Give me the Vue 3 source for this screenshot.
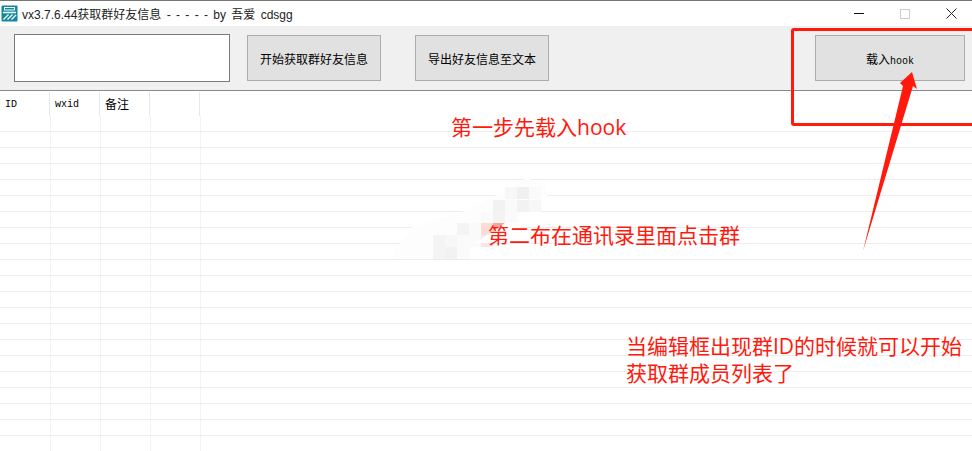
<template>
  <div class="window">
    <div class="titlebar">
      <svg class="app-icon" width="17" height="17" viewBox="0 0 17 17">
        <rect x="0.5" y="0.5" width="16" height="16" rx="1" fill="#0f8a9c" />
        <rect x="3.5" y="2.5" width="10" height="2.5" fill="none" stroke="#fff" stroke-width="1" />
        <path d="M2 7.5 H15 M2.5 14.5 L7.5 9.5 M6.5 14.5 L11.5 9.5 M10.5 14.5 L15 10" stroke="#fff" stroke-width="1.3" fill="none" />
      </svg>
      <span class="title">vx3.7.6.44获取群好友信息 - - - - - by 吾爱 cdsgg</span>
      <div class="win-btns">
        <span class="win-btn"><i class="min"></i></span>
        <span class="win-btn"><i class="max"></i></span>
        <span class="win-btn">
          <svg width="11" height="11" viewBox="0 0 11 11"><path d="M0.5 0.5 L10.5 10.5 M10.5 0.5 L0.5 10.5" stroke="#222" stroke-width="1" fill="none" /></svg>
        </span>
      </div>
    </div>

    <div class="toolbar">
      <div class="editbox"></div>
      <button class="btn start">开始获取群好友信息</button>
      <button class="btn export">导出好友信息至文本</button>
      <button class="btn load">载入<span class="latin">hook</span></button>
    </div>

    <div class="table">
      <div class="head">
        <div v-for="h in headers" :key="h.label" class="head-cell" :class="{ cjk: h.cjk }">{{ h.label }}</div>
      </div>
      <div v-for="n in 21" :key="n" class="row">
        <div v-for="c in 4" :key="c" class="cell"></div>
      </div>
    </div>

    <!-- annotations drawn over the screenshot -->
    <svg class="smudge" width="170" height="100" viewBox="0 0 170 100">
      <path d="M5 80 L23 57 L70 43 L117 20 L137 8 L157 17 L157 30 L133 43 L90 70 L67 88 L5 88 Z" fill="#fdfdfd" />
      <rect v-for="(b, i) in mosaic" :key="i" :x="b[0]" :y="b[1]" width="12" height="12" :fill="b[2]" />
      <path d="M85 73 L115 53 L130 53 L130 73 Z" fill="#fff" />
    </svg>
    <div class="redbox"></div>
    <svg class="arrow" width="60" height="190" viewBox="0 0 60 190">
      <path d="M3 181 L43 16 L40 13 L52 2 L57 19 L53 16 Z" fill="#ff1a0d" />
    </svg>
    <div class="note step1">第一步先载入hook</div>
    <div class="note step2">第二布在通讯录里面点击群</div>
    <div class="note step3">当编辑框出现群ID的时候就可以开始<br />获取群成员列表了</div>
  </div>
</template>

<script setup>
const headers = [
  { label: "ID" },
  { label: "wxid" },
  { label: "备注", cjk: true },
  { label: "" },
];

// pixelated patch left over from the blur in the original image
const mosaic = [
  [115, 17, "#f7f7f7"], [127, 17, "#f0f0f0"], [139, 17, "#fafafa"],
  [103, 30, "#f2f2f2"], [115, 30, "#fafafa"], [127, 30, "#f2f2f2"], [139, 30, "#f7f7f7"],
  [91, 42, "#fafafa"], [103, 42, "#f3f3f3"], [115, 42, "#fafafa"],
  [67, 53, "#f4f4f4"], [79, 53, "#fafafa"], [91, 53, "#fbdcd8"], [103, 53, "#f6a49c"],
  [43, 65, "#f4f4f4"], [55, 65, "#f7f7f7"], [67, 65, "#fafafa"], [79, 65, "#fafafa"], [91, 65, "#fce6e3"],
  [43, 77, "#f4f4f4"], [55, 77, "#f2f2f2"], [67, 77, "#fafafa"],
];
</script>

<style scoped>
.window {
  position: relative;
  width: 972px;
  height: 451px;
  overflow: hidden;
  background: #fff;
  border-top: 1px solid #777;
  box-sizing: border-box;
  font-family: "Noto Sans CJK SC", "Liberation Sans", sans-serif;
  color: #000;
}

.titlebar {
  display: flex;
  align-items: center;
  height: 25px;
  padding-left: 1px;
}
.app-icon {
  flex: none;
  margin-right: 4px;
}
.title {
  font-family: "Liberation Sans", "Noto Sans CJK SC", sans-serif;
  font-size: 12px;
  word-spacing: 2px;
  color: #222;
  white-space: nowrap;
}
.win-btns {
  display: flex;
  margin-left: auto;
  margin-right: -2px;
}
.win-btn {
  display: flex;
  align-items: center;
  justify-content: center;
  width: 46px;
  height: 25px;
}
.win-btn .min {
  display: block;
  width: 10px;
  height: 1px;
  background: #111;
}
.win-btn .max {
  display: block;
  width: 8px;
  height: 8px;
  border: 1px solid #ccc;
}

.toolbar {
  display: flex;
  align-items: center;
  height: 65px;
  padding-left: 14px;
  padding-right: 7px;
  box-sizing: border-box;
  background: #f0f0f0;
  border-bottom: 1px solid #8a8a90;
}
.editbox {
  width: 216px;
  height: 48px;
  box-sizing: border-box;
  background: #fff;
  border: 1px solid #7a7a7a;
}
.btn {
  height: 46px;
  padding: 0;
  box-sizing: border-box;
  background: #e1e1e1;
  border: 1px solid #adadad;
  font-family: "Noto Sans CJK SC", sans-serif;
  font-size: 12px;
  color: #000;
}
.start {
  width: 134px;
  margin-left: 17px;
}
.export {
  width: 134px;
  margin-left: 34px;
}
.load {
  width: 150px;
  margin-left: auto;
}
.latin {
  font-family: "Liberation Mono", monospace;
  font-size: 10px;
}

.table {
  display: flex;
  flex-direction: column;
}
.head {
  display: flex;
  height: 25px;
  padding-top: 1px;
  box-sizing: border-box;
}
.head-cell {
  width: 50px;
  height: 24px;
  box-sizing: border-box;
  padding-left: 5px;
  border-right: 1px solid #e8e8e8;
  font-family: "Liberation Mono", monospace;
  font-size: 10px;
  line-height: 26px;
}
.head-cell.cjk {
  font-family: "Noto Sans CJK SC", sans-serif;
  font-size: 12px;
  line-height: 24px;
}
.row {
  display: flex;
  flex: none;
  height: 16px;
  padding-left: 1px;
  box-sizing: border-box;
  border-bottom: 1px solid #ededed;
}
.cell {
  width: 50px;
  box-sizing: border-box;
  border-right: 1px solid #f3f3f3;
}

.smudge {
  position: absolute;
  left: 390px;
  top: 169px;
}
.redbox {
  position: absolute;
  left: 791px;
  top: 27px;
  width: 190px;
  height: 92px;
  border: 3px solid #ff1a0d;
  border-radius: 3px;
}
.arrow {
  position: absolute;
  left: 860px;
  top: 69px;
}
.note {
  position: absolute;
  font-family: "Open Sans", "Noto Sans CJK SC", sans-serif;
  font-size: 21px;
  color: #ff1a0d;
  white-space: nowrap;
}
.step1 {
  left: 451px;
  top: 111px;
  line-height: 30px;
}
.step2 {
  left: 488px;
  top: 219px;
  line-height: 30px;
}
.step3 {
  left: 626px;
  top: 332px;
  line-height: 27px;
}
</style>
